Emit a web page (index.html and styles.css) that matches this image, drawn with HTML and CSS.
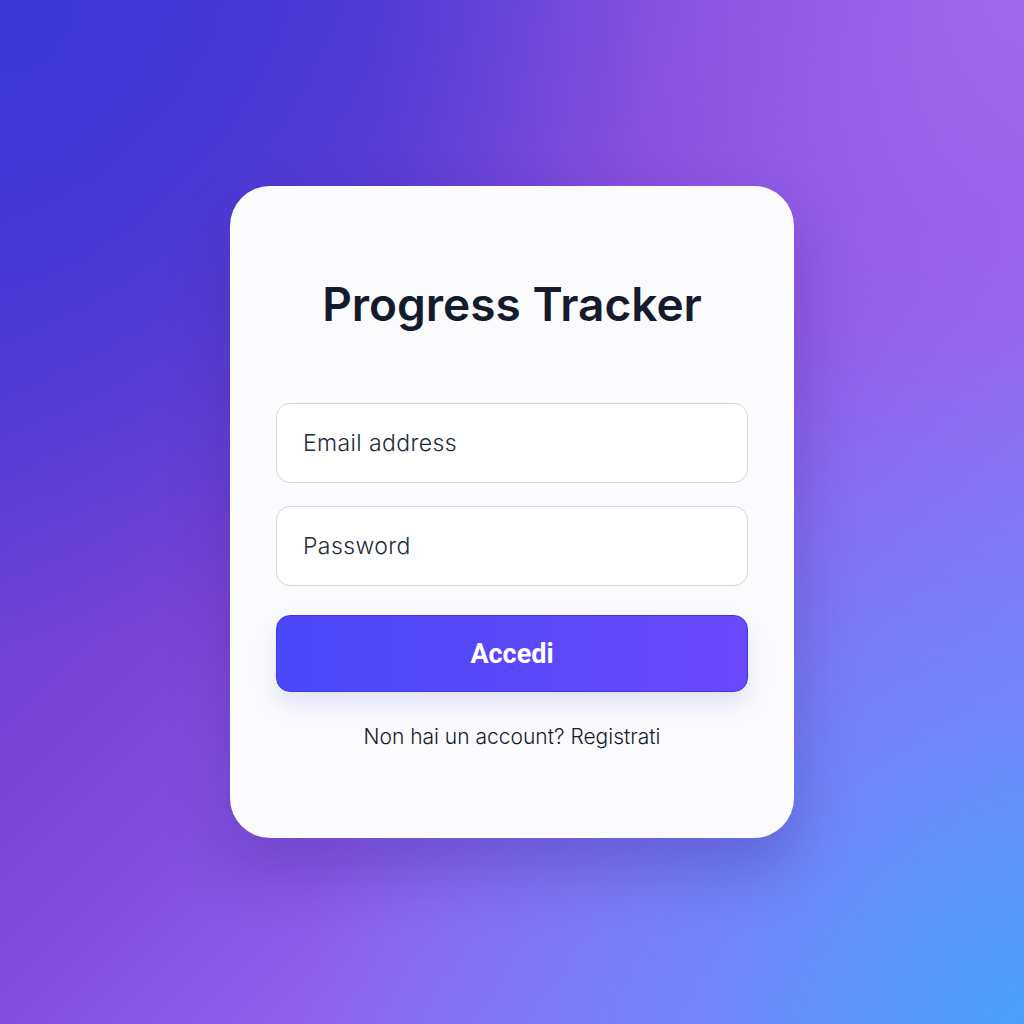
FILE: index.html
```html
<!DOCTYPE html>
<html lang="it">
<head>
    <meta charset="UTF-8">
    <meta name="viewport" content="width=device-width, initial-scale=1.0">
    <title>Progress Tracker - Accedi</title>
    <link rel="stylesheet" href="styles.css">
</head>
<body>
    <div class="login-card">
        <h1>Progress Tracker</h1>
        <form class="login-form">
            <input type="email" name="email" placeholder="Email address">
            <input type="password" name="password" placeholder="Password">
            <button type="submit">Accedi</button>
        </form>
        <p class="signup">Non hai un account? <a href="#">Registrati</a></p>
    </div>
</body>
</html>
```

FILE: styles.css
```css
html, body {
    height: 100%;
}
body {
    margin: 0;
    font-family: Inter, "Noto Sans", sans-serif;
    display: flex;
    align-items: center;
    justify-content: center;
    background:
        radial-gradient(circle at 100% 100%, rgba(76, 158, 250, 1) 0%, rgba(100, 140, 250, 0.55) 25%, rgba(120, 120, 250, 0) 50%),
        radial-gradient(circle at 0% 0%, rgba(60, 54, 212, 1) 0%, rgba(60, 54, 212, 0) 45%),
        radial-gradient(circle at 100% 0%, rgba(160, 104, 238, 1) 0%, rgba(160, 104, 238, 0) 45%),
        linear-gradient(135deg, #4a3ad6 0%, #7a45d6 40%, #8f62ee 65%, #8b78f8 85%, #6a90f8 100%);
}
.login-card {
    width: 564px;
    height: 652px;
    box-sizing: border-box;
    background: #fbfbfe;
    border-radius: 40px;
    padding: 76px 46px 0;
    box-shadow: 0 30px 60px rgba(40, 20, 120, 0.25);
    text-align: center;
}
h1 {
    margin: 0;
    font-size: 46px;
    font-weight: 600;
    color: #141b2d;
    letter-spacing: 0;
    line-height: 84px;
}
.login-form {
    display: flex;
    flex-direction: column;
    gap: 23px;
    margin-top: 57px;
}
input {
    height: 80px;
    box-sizing: border-box;
    border: 1px solid #d4d5e0;
    border-radius: 14px;
    background: #ffffff;
    padding: 0 26px;
    font-family: Inter, "Noto Sans", sans-serif;
    font-size: 23px;
    font-weight: 300;
    letter-spacing: 0.4px;
    color: #1f2937;
}
input::placeholder {
    color: #222a3a;
}
button {
    height: 77px;
    margin-top: 6px;
    border: 1px solid #3d35e8;
    border-radius: 14px;
    background: linear-gradient(90deg, #4b47fb 0%, #5a48fb 50%, #6b48fb 100%);
    color: #ffffff;
    font-family: Roboto, Inter, sans-serif;
    font-size: 27px;
    font-weight: 700;
    box-shadow: 0 12px 24px rgba(80, 70, 200, 0.14);
    cursor: pointer;
}
.signup {
    margin: 32px 0 0;
    font-size: 21px;
    font-weight: 300;
    color: #141b2d;
}
.signup a {
    color: #141b2d;
    text-decoration: none;
}
```
